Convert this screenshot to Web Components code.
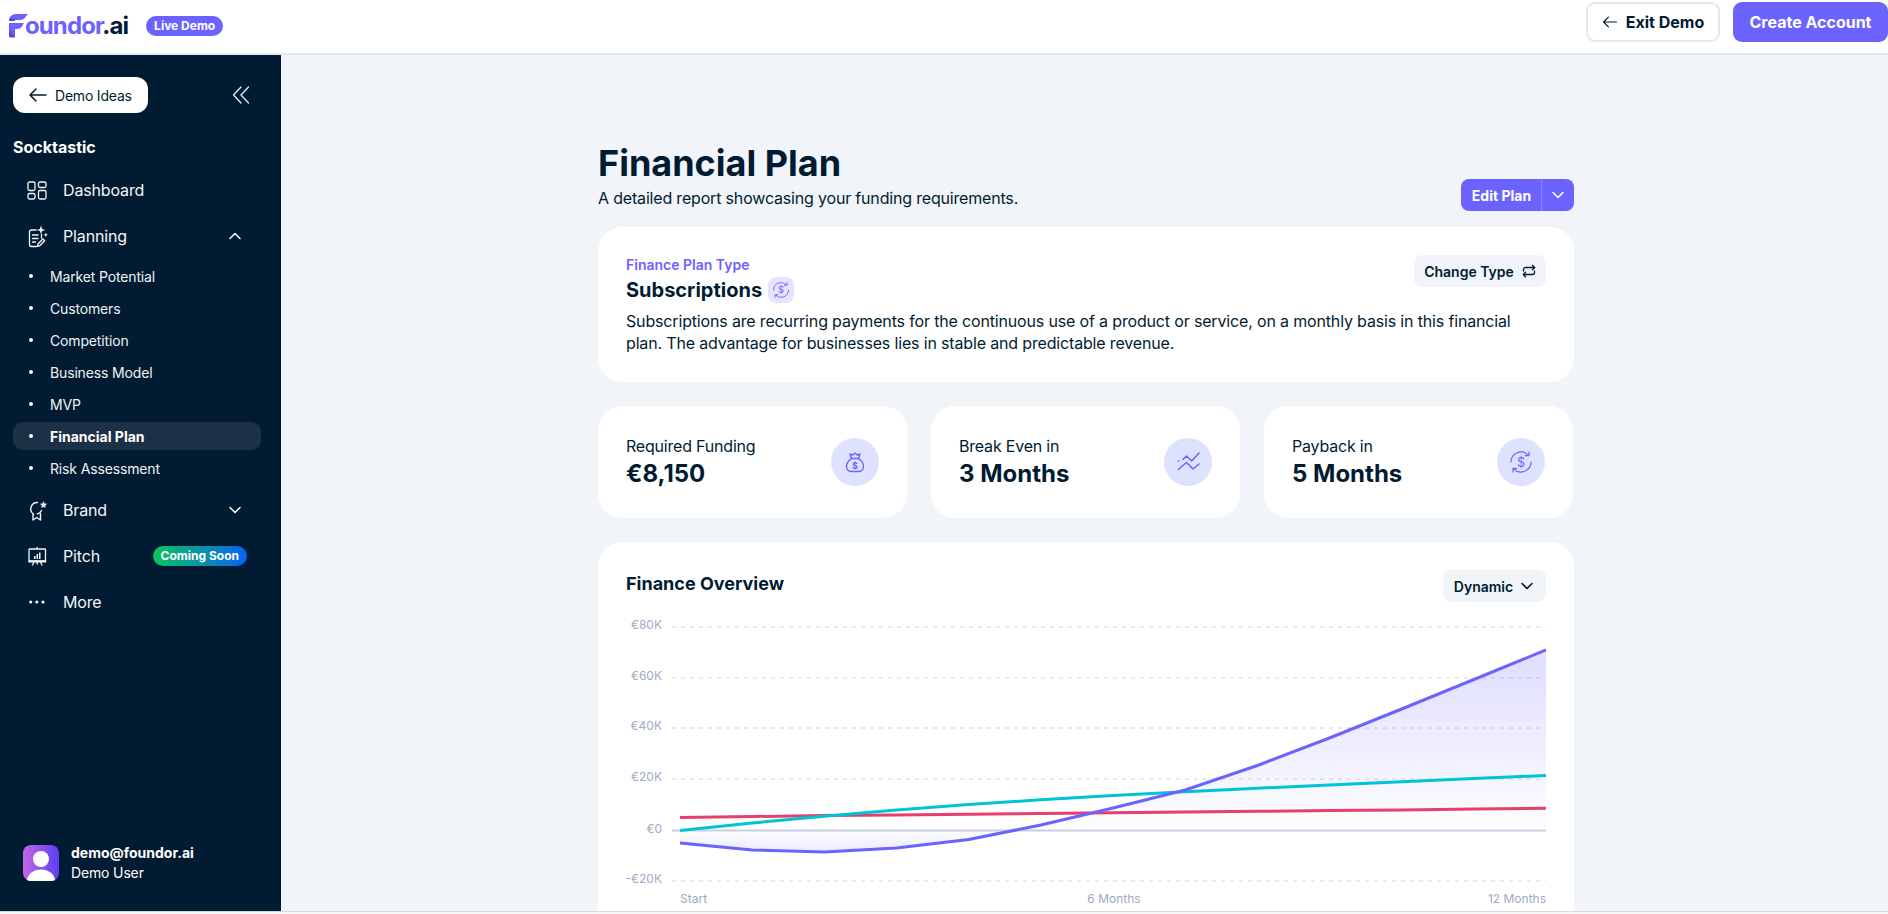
<!DOCTYPE html>
<html lang="en">
<head>
<meta charset="utf-8">
<title>Foundor.ai - Financial Plan</title>
<style>
  html, body { margin: 0; height: 100%; overflow: hidden; }
  body { font-family: "Inter", "Liberation Sans", sans-serif; color: #011c32; background: #f1f4f8; }
</style>
</head>
<body>
<app-shell>
  <top-bar slot="top"></top-bar>
  <side-bar slot="side">
    <nav-item label="Dashboard" icon="dashboard"></nav-item>
    <nav-item label="Planning" icon="planning" caret="up"></nav-item>
    <sub-item>Market Potential</sub-item>
    <sub-item>Customers</sub-item>
    <sub-item>Competition</sub-item>
    <sub-item>Business Model</sub-item>
    <sub-item>MVP</sub-item>
    <sub-item active>Financial Plan</sub-item>
    <sub-item>Risk Assessment</sub-item>
    <nav-item label="Brand" icon="brand" caret="down"></nav-item>
    <nav-item label="Pitch" icon="pitch" soon></nav-item>
    <nav-item label="More" icon="more"></nav-item>
  </side-bar>
  <plan-page>
    <plan-title slot="title"></plan-title>
    <plan-type></plan-type>
    <div class="stats" slot="stats">
      <stat-card label="Required Funding" value="€8,150" icon="bag"></stat-card>
      <stat-card label="Break Even in" value="3 Months" icon="trend"></stat-card>
      <stat-card label="Payback in" value="5 Months" icon="payback"></stat-card>
    </div>
    <finance-chart slot="chart"></finance-chart>
  </plan-page>
</app-shell>

<script>
const ICONS = {
  dashboard: `<g fill="none" stroke="currentColor" stroke-width="1.3"><rect x="2" y="4" width="7" height="8.5" rx="1.5"/><rect x="12.5" y="4" width="7.5" height="5.5" rx="1.5"/><rect x="2" y="15.5" width="7" height="5.5" rx="1.5"/><rect x="12.5" y="12.5" width="7.5" height="8.5" rx="1.5"/></g>`,
  planning: `<g fill="none" stroke="currentColor" stroke-width="1.3" stroke-linecap="round" stroke-linejoin="round"><path d="M10 6H5.5a2 2 0 0 0-2 2v12.500a2 2 0 0 0 2 2h5M15.500 14v-3.500"/><path d="M6.500 11h5.500M6.500 14.500h5.500M6.500 18h3"/><path d="M11.500 22.300l.4-2.300 5-5 1.800 1.800-5 5z"/></g><path fill="currentColor" d="M15 1.500l1.100 3.400 3.400 1.100-3.400 1.100L15 10.500l-1.100-3.400L10.500 6l3.400-1.100zM19.800 8.500l.6 1.700 1.600.6-1.600.6-.6 1.600-.6-1.600-1.700-.6 1.700-.6z"/>`,
  brand: `<g fill="none" stroke="currentColor" stroke-width="1.4" stroke-linecap="round" stroke-linejoin="round"><path d="M11.500 4.500a6.500 6.500 0 0 0-4 11.800"/><path d="M7 16v6l3.800-2.500 3.700 2.500v-6.200M15.500 12.500a6.500 6.500 0 0 1-4 3.500"/></g><path fill="currentColor" d="M17.500 3l1 2.500 2.700.2-2 1.800.6 2.600-2.300-1.400-2.300 1.400.6-2.600-2-1.800 2.700-.2z"/>`,
  pitch: `<g fill="none" stroke="currentColor" stroke-width="1.3" stroke-linecap="round" stroke-linejoin="round"><rect x="3" y="5" width="16.5" height="12" rx=".8"/><path d="M11.200 3.500V5M8 18l-1.500 3M14.500 18l1.500 3M11.200 18v2"/></g><path fill="currentColor" d="M2.300 16.500h18v2h-18zM8 12h1.500v3H8zM10.500 10h1.500v5h-1.500zM13 8.500h1.500V15H13z"/>`,
  more: `<g fill="currentColor"><circle cx="4.700" cy="12" r="1.600"/><circle cx="10.800" cy="12" r="1.600"/><circle cx="17" cy="12" r="1.600"/></g>`,
  bag: `<g fill="none" stroke="currentColor" stroke-width="1.4" stroke-linecap="round" stroke-linejoin="round"><path d="M8.500 8.500h7c3 2 5 5 5 8 0 3-2.200 5-5 5h-7c-2.800 0-5-2-5-5 0-3 2-6 5-8z"/><path d="M8.500 8.500L7 4l2.800 1L12 3l2.200 2L17 4l-1.500 4.500"/></g><text x="12" y="18.500" text-anchor="middle" font-size="9" font-weight="700" fill="currentColor">$</text>`,
  trend: `<g fill="none" stroke="currentColor" stroke-width="1.6" stroke-linecap="round" stroke-linejoin="round"><path d="M2.500 11h.3M7 9.500L10.500 6l5.200 5L23 3"/><path d="M2.300 19.500l8.200-7 6.500 6.500 6-5"/></g>`,
  payback: `<g fill="none" stroke="currentColor" stroke-width="1.200" stroke-linecap="round" stroke-linejoin="round"><path d="M2 12A10 10 0 0 1 19.300 5.200"/><path d="M22 12A10 10 0 0 1 4.700 18.800"/><path d="M20 2v3.700h-3.700M4 22v-3.700h3.700"/></g><text x="12" y="16.500" text-anchor="middle" font-size="12.500" font-weight="400" fill="currentColor">$</text>`
};
const svgIcon = (name, size) => `<svg width="${size}" height="${size}" viewBox="0 0 24 24">${ICONS[name]}</svg>`;
const CHEVRON_DOWN = `<svg width="16" height="16" viewBox="0 0 16 16" fill="none" stroke="currentColor" stroke-width="1.6" stroke-linecap="round" stroke-linejoin="round"><path d="M3 5.500l5 5 5-5"/></svg>`;
const CHEVRON_UP = `<svg width="16" height="16" viewBox="0 0 16 16" fill="none" stroke="currentColor" stroke-width="1.6" stroke-linecap="round" stroke-linejoin="round"><path d="M3 10.500l5-5 5 5"/></svg>`;
const ARROW_LEFT = `<svg width="20" height="20" viewBox="0 0 20 20" fill="none" stroke="currentColor" stroke-width="1.5" stroke-linecap="round" stroke-linejoin="round"><path d="M18 10H2M8 4l-6 6 6 6"/></svg>`;

class AppShell extends HTMLElement {
  constructor() {
    super();
    this.attachShadow({ mode: 'open' });
    this.shadowRoot.innerHTML = `
      <style>
        :host { display: flex; flex-direction: column; height: 914px; background: #f1f4f8; }
        .body { flex: 1; display: flex; min-height: 0; }
        .strip { height: 3px; background: #f6f6f6; border-top: 1px solid #d9d9d9; box-sizing: border-box; }
      </style>
      <slot name="top"></slot>
      <div class="body">
        <slot name="side"></slot>
        <slot></slot>
      </div>
      <div class="strip"></div>
    `;
  }
}

class TopBar extends HTMLElement {
  constructor() {
    super();
    this.attachShadow({ mode: 'open' });
    this.shadowRoot.innerHTML = `
      <style>
        :host { display: flex; align-items: center; justify-content: space-between; height: 55px; box-sizing: border-box; background: #fff; border-bottom: 2px solid #e2e8f0; padding: 0 0 2px 9px; }
        .brand { display: flex; align-items: center; }
        .logo { display: flex; align-items: flex-end; color: #6c63ff; font-size: 24px; font-weight: 700; line-height: 24px; }
        .logo svg { display: block; margin-right: -3px; }
        .logo span { color: #011c32; }
        .logo b { font-weight: 700; letter-spacing: -.9px; }
        .live { margin-left: 18px; height: 20px; padding: 0 8px; border-radius: 10px; background: #6c63ff; color: #fff; font-size: 12px; font-weight: 700; line-height: 20px; }
        .actions { display: flex; gap: 13px; align-self: flex-start; margin-top: 2px; }
        button { font: inherit; font-size: 16px; font-weight: 700; height: 40px; box-sizing: border-box; border-radius: 9px; display: flex; align-items: center; cursor: pointer; }
        .exit { width: 134px; justify-content: center; gap: 8px; background: #fff; border: 2px solid #e2e8f0; color: #011c32; }
        .exit svg { width: 16px; height: 16px; }
        .create { width: 155px; justify-content: center; background: #6c63ff; border: 0; color: #fff; }
      </style>
      <div class="brand">
        <div class="logo">
          <svg width="19" height="24" viewBox="0 0 19 24">
            <defs><linearGradient id="f" x1="0" y1="1" x2="1" y2="0"><stop offset="0" stop-color="#3f37b8"/><stop offset=".35" stop-color="#6c63ff"/></linearGradient></defs>
            <path fill="url(#f)" d="M0 7C0 3 3 0 7 0h12l-2 2.500C15.500 4.500 14 6 11 6H7C6.400 6 6 6.400 6 7z"/>
            <path fill="url(#f)" d="M0 9h15l-1.500 2.500C12.500 13.500 11 15 8 15H6v8.500H2c-1.200 0-2-.8-2-2z"/>
          </svg>
          <b>oundor<span>.ai</span></b>
        </div>
        <div class="live">Live Demo</div>
      </div>
      <div class="actions">
        <button class="exit">${ARROW_LEFT}Exit Demo</button>
        <button class="create">Create Account</button>
      </div>
    `;
  }
}

class SideBar extends HTMLElement {
  constructor() {
    super();
    this.attachShadow({ mode: 'open' });
    this.shadowRoot.innerHTML = `
      <style>
        :host { display: flex; flex-direction: column; flex: none; width: 281px; box-sizing: border-box; background: #011c32; color: #fff; padding: 22px 20px 28px 13px; letter-spacing: -.15px; }
        .top { display: flex; align-items: center; justify-content: space-between; padding-right: 11px; }
        .back { display: flex; align-items: center; gap: 7px; width: 135px; height: 36px; box-sizing: border-box; padding-left: 15px; background: #fff; border: 0; border-radius: 12px; color: #011c32; font: inherit; font-size: 14px; font-weight: 400; letter-spacing: -.2px; }
        .collapse { color: #e7ebf0; display: block; }
        h2 { margin: 22px 0 8px; font-size: 16px; line-height: 24px; font-weight: 700; letter-spacing: 0; }
        nav { display: flex; flex-direction: column; }
        .user { margin-top: auto; display: flex; align-items: center; gap: 12px; padding-left: 10px; }
        .avatar { display: block; }
        .who { padding-top: 1px; }
        .mail { font-size: 14px; font-weight: 700; line-height: 20px; letter-spacing: 0; }
        .role { font-size: 14px; line-height: 20px; }
      </style>
      <div class="top">
        <button class="back">${ARROW_LEFT}Demo Ideas</button>
        <svg class="collapse" width="18" height="18" viewBox="0 0 18 18" fill="none" stroke="currentColor" stroke-width="1.3" stroke-linecap="round" stroke-linejoin="round"><path d="M9 1L1.500 9 9 17M16.500 1L9 9l7.500 8"/></svg>
      </div>
      <h2>Socktastic</h2>
      <nav><slot></slot></nav>
      <div class="user">
        <svg class="avatar" width="36" height="36" viewBox="0 0 36 36">
          <defs>
            <linearGradient id="av" x1="0" y1="0" x2="1" y2="0"><stop offset="0" stop-color="#c465e6"/><stop offset="1" stop-color="#5a3ff2"/></linearGradient>
            <clipPath id="avc"><rect width="36" height="36" rx="8"/></clipPath>
          </defs>
          <g clip-path="url(#avc)"><rect width="36" height="36" fill="url(#av)"/><circle cx="18" cy="14" r="8" fill="#fff"/><ellipse cx="18" cy="36" rx="14" ry="11.500" fill="#fff"/></g>
        </svg>
        <div class="who"><div class="mail">demo@foundor.ai</div><div class="role">Demo User</div></div>
      </div>
    `;
  }
}

class NavItem extends HTMLElement {
  connectedCallback() {
    if (this.shadowRoot) return;
    this.attachShadow({ mode: 'open' });
    const caret = this.getAttribute('caret');
    this.shadowRoot.innerHTML = `
      <style>
        :host { display: flex; align-items: center; height: 46px; padding-left: 13px; padding-right: 12px; font-size: 16px; color: #f2f5f8; }
        :host([caret="up"]) { margin-bottom: 3px; }
        :host([caret="down"]) { margin-top: 1px; }
        .ic { width: 24px; height: 24px; margin-right: 13px; }
        .ic svg { display: block; }
        .caret { margin-left: auto; margin-right: 6px; display: flex; }
        .soon { margin-left: auto; margin-right: 2px; height: 20px; padding: 0 8px; border-radius: 10px; background: linear-gradient(90deg, #0bc45c, #0a62f2); color: #fff; font-size: 12px; font-weight: 700; line-height: 20px; letter-spacing: 0; }
      </style>
      <span class="ic">${svgIcon(this.getAttribute('icon'), 24)}</span>
      <span>${this.getAttribute('label')}</span>
      ${caret === 'up' ? `<span class="caret">${CHEVRON_UP}</span>` : ''}
      ${caret === 'down' ? `<span class="caret">${CHEVRON_DOWN}</span>` : ''}
      ${this.hasAttribute('soon') ? '<span class="soon">Coming Soon</span>' : ''}
    `;
  }
}

class SubItem extends HTMLElement {
  constructor() {
    super();
    this.attachShadow({ mode: 'open' });
    this.shadowRoot.innerHTML = `
      <style>
        :host { display: flex; align-items: center; height: 28px; margin-bottom: 4px; border-radius: 10px; padding-left: 16px; font-size: 14px; color: #eef2f6; }
        :host([active]) { background: #1c3145; font-weight: 700; color: #fff; letter-spacing: 0; }
        i { width: 4px; height: 4px; border-radius: 50%; background: #fff; margin-right: 17px; }
      </style>
      <i></i><slot></slot>
    `;
  }
}

class PlanPage extends HTMLElement {
  constructor() {
    super();
    this.attachShadow({ mode: 'open' });
    this.shadowRoot.innerHTML = `
      <style>
        :host { display: block; flex: 1; min-width: 0; overflow: hidden; }
        .inner { width: 976px; margin-left: 317px; padding-top: 88px; display: flex; flex-direction: column; gap: 24px; }
        .first { display: flex; flex-direction: column; gap: 16px; }
        ::slotted(.stats) { display: grid; grid-template-columns: repeat(3, 309px); gap: 24px; }
      </style>
      <div class="inner">
        <div class="first">
          <slot name="title"></slot>
          <slot></slot>
        </div>
        <slot name="stats"></slot>
        <slot name="chart"></slot>
      </div>
    `;
  }
}

class PlanTitle extends HTMLElement {
  constructor() {
    super();
    this.attachShadow({ mode: 'open' });
    this.shadowRoot.innerHTML = `
      <style>
        :host { display: flex; align-items: flex-end; justify-content: space-between; }
        h1 { margin: 0 0 3px; font-size: 36px; line-height: 40px; font-weight: 700; }
        p { margin: 0 0 1px; font-size: 16px; line-height: 24px; letter-spacing: -.18px; }
        .edit { display: flex; height: 32px; width: 113px; border-radius: 8px; background: #6c63ff; color: #fff; font-size: 14px; font-weight: 700; align-items: center; }
        .edit span { flex: 1; text-align: center; padding-left: 1px; }
        .edit i { display: flex; align-items: center; justify-content: center; width: 33px; height: 100%; border-left: 1px solid #8a83ff; box-sizing: border-box; }
      </style>
      <div><h1>Financial Plan</h1><p>A detailed report showcasing your funding requirements.</p></div>
      <div class="edit"><span>Edit Plan</span><i>${CHEVRON_DOWN}</i></div>
    `;
  }
}

class PlanType extends HTMLElement {
  constructor() {
    super();
    this.attachShadow({ mode: 'open' });
    this.shadowRoot.innerHTML = `
      <style>
        :host { display: block; position: relative; background: #fff; border-radius: 24px; padding: 28px; }
        .k { font-size: 14px; line-height: 20px; font-weight: 600; color: #6c63ff; }
        .t { display: flex; align-items: center; gap: 6px; margin: 2px 0 7px; height: 26px; font-size: 20px; font-weight: 700; }
        .b { width: 26px; height: 26px; border-radius: 8px; background: #e6e3ff; color: #6c63ff; display: flex; align-items: center; justify-content: center; }
        p { margin: 0; font-size: 16px; line-height: 22px; letter-spacing: -.16px; }
        .change { position: absolute; top: 28px; right: 28px; width: 132px; height: 32px; border-radius: 8px; background: #f1f4f8; display: flex; align-items: center; justify-content: center; gap: 8px; font-size: 14px; font-weight: 600; }
      </style>
      <div class="k">Finance Plan Type</div>
      <div class="t">Subscriptions <span class="b">${svgIcon('payback', 18)}</span></div>
      <p>Subscriptions are recurring payments for the continuous use of a product or service, on a monthly basis in this financial plan. The advantage for businesses lies in stable and predictable revenue.</p>
      <div class="change">Change Type
        <svg width="14" height="14" viewBox="0 0 14 14" fill="none" stroke="currentColor" stroke-width="1.3" stroke-linecap="round" stroke-linejoin="round"><path d="M1.500 7V5.500a2 2 0 0 1 2-2h9M10.500 1.200l2.200 2.300-2.200 2.300M12.500 7v1.500a2 2 0 0 1-2 2h-9M3.500 8.200l-2.200 2.300 2.200 2.300"/></svg>
      </div>
    `;
  }
}

class StatCard extends HTMLElement {
  connectedCallback() {
    if (this.shadowRoot) return;
    this.attachShadow({ mode: 'open' });
    this.shadowRoot.innerHTML = `
      <style>
        :host { display: flex; align-items: center; justify-content: space-between; height: 112px; box-sizing: border-box; background: #fff; border-radius: 24px; padding: 0 28px; }
        .l { font-size: 16px; line-height: 24px; letter-spacing: -.2px; margin-top: -1px; }
        .v { font-size: 24px; line-height: 32px; font-weight: 700; }
        .c { width: 48px; height: 48px; border-radius: 50%; background: #dfe2ff; color: #6c63ff; display: flex; align-items: center; justify-content: center; }
      </style>
      <div><div class="l">${this.getAttribute('label')}</div><div class="v">${this.getAttribute('value')}</div></div>
      <div class="c">${svgIcon(this.getAttribute('icon'), 24)}</div>
    `;
  }
}

class FinanceChart extends HTMLElement {
  constructor() {
    super();
    this.attachShadow({ mode: 'open' });
    // points are in svg space: x starts at 54, baseline is y=218.5
    const xs = [...Array(13).keys()].map(i => 54 + i * 72.17);
    const purple = [231, 238, 240, 236, 227.5, 213, 196, 178, 153.5, 126, 97, 67.5, 38];
    const teal = [218.5, 211, 204.2, 198, 192.6, 187.8, 183.6, 179.8, 176.3, 172.9, 169.7, 166.5, 163.5];
    const red = [205.5, 204.5, 203.6, 202.9, 202.2, 201.5, 200.8, 200, 199.3, 198.6, 197.9, 197.1, 196.3];
    const line = ys => ys.map((y, i) => `${i ? 'L' : 'M'}${xs[i].toFixed(1)} ${y}`).join(' ');
    const grid = [[15, '€80K'], [66, '€60K'], [116, '€40K'], [167, '€20K'], [269, '-€20K']];
    this.shadowRoot.innerHTML = `
      <style>
        :host { display: block; background: #fff; border-radius: 24px; padding: 28px 28px 28px; }
        .head { display: flex; justify-content: space-between; align-items: flex-start; }
        h3 { margin: 0; font-size: 18px; line-height: 28px; font-weight: 700; }
        .drop { width: 103px; height: 32px; border-radius: 8px; background: #f1f4f8; display: flex; align-items: center; justify-content: center; gap: 6px; font-size: 14px; font-weight: 600; }
        .drop svg { display: block; }
        svg.plot { display: block; margin-top: 10px; }
        text { font-family: inherit; font-size: 12px; fill: #9eabc3; }
      </style>
      <div class="head"><h3>Finance Overview</h3><div class="drop">Dynamic ${CHEVRON_DOWN}</div></div>
      <svg class="plot" width="920" height="300" viewBox="0 0 920 300">
        <defs>
          <linearGradient id="area" gradientUnits="userSpaceOnUse" x1="0" y1="38" x2="0" y2="240">
            <stop offset="0" stop-color="#6c63ff" stop-opacity=".22"/>
            <stop offset=".89" stop-color="#6c63ff" stop-opacity=".01"/>
            <stop offset="1" stop-color="#6c63ff" stop-opacity=".13"/>
          </linearGradient>
        </defs>
        ${grid.map(([y, t]) => `<line x1="46" x2="920" y1="${y}" y2="${y}" stroke="#cdd6e6" stroke-dasharray="4 5"/><text x="36" y="${y + 2}" text-anchor="end">${t}</text>`).join('')}
        <text x="36" y="220.5" text-anchor="end">€0</text>
        <path d="${line(purple)} L920 218.5 L54 218.5 Z" fill="url(#area)"/>
        <line x1="46" x2="920" y1="218.5" y2="218.5" stroke="#c5d0e3" stroke-width="2"/>
        <path d="${line(red)}" fill="none" stroke="#e83e6c" stroke-width="3"/>
        <path d="${line(teal)}" fill="none" stroke="#00c4d6" stroke-width="3"/>
        <path d="${line(purple)}" fill="none" stroke="#6c63ff" stroke-width="3"/>
        <text x="54" y="291">Start</text>
        <text x="488" y="291" text-anchor="middle">6 Months</text>
        <text x="920" y="291" text-anchor="end">12 Months</text>
      </svg>
    `;
  }
}

customElements.define('app-shell', AppShell);
customElements.define('top-bar', TopBar);
customElements.define('side-bar', SideBar);
customElements.define('nav-item', NavItem);
customElements.define('sub-item', SubItem);
customElements.define('plan-page', PlanPage);
customElements.define('plan-title', PlanTitle);
customElements.define('plan-type', PlanType);
customElements.define('stat-card', StatCard);
customElements.define('finance-chart', FinanceChart);
</script>
</body>
</html>
